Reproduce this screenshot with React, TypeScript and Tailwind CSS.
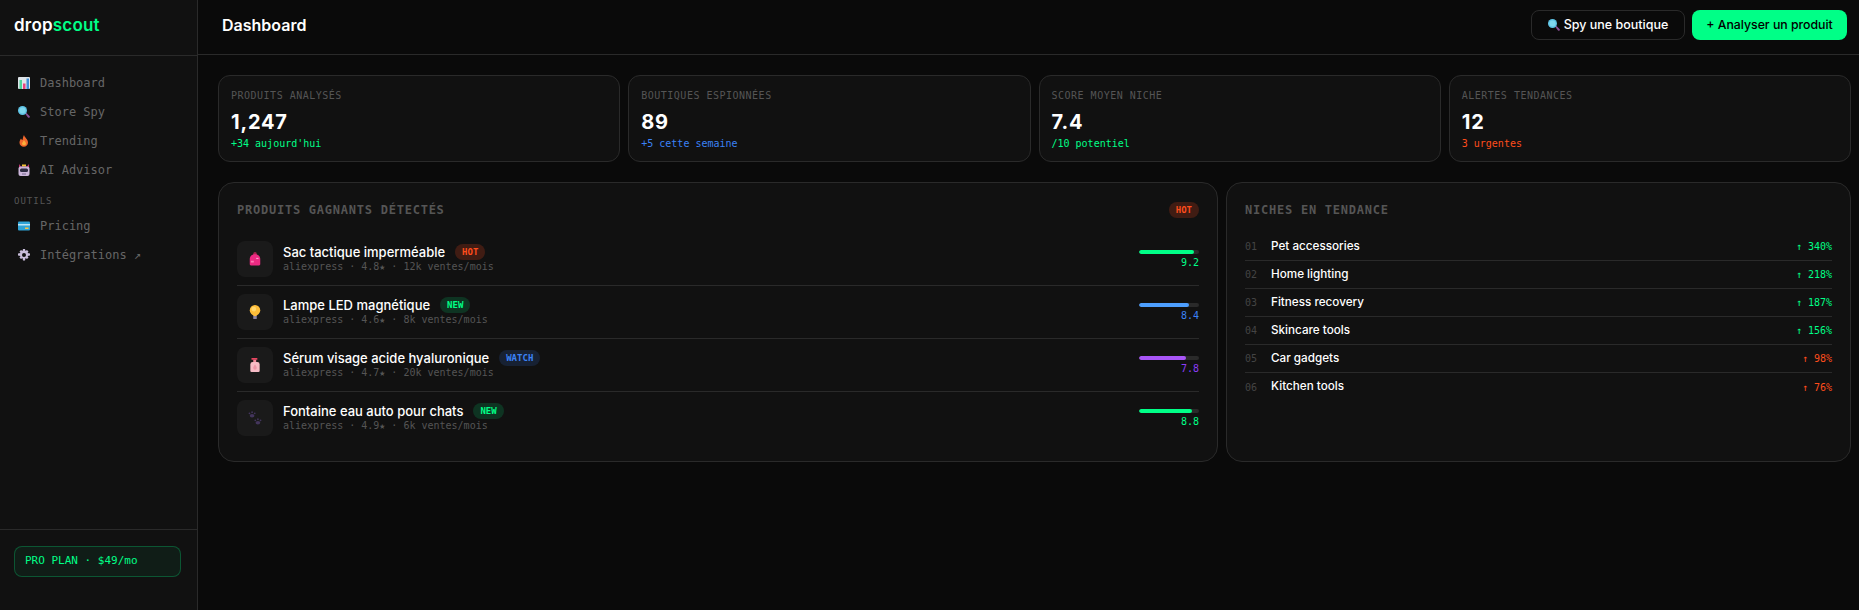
import type { ReactNode } from "react";

const display = "font-['Inter','Liberation_Sans',sans-serif]";
const mono = "font-['DejaVu_Sans_Mono','Liberation_Mono',monospace]";

const Glyph = ({ size = 12, children }: { size?: number; children: ReactNode }) => (
  <svg width={size} height={size} viewBox="0 0 24 24" className="shrink-0">
    {children}
  </svg>
);

const ChartIcon = () => (
  <Glyph>
    <rect x="0" y="0" width="24" height="24" rx="2" fill="#dfe5ea" />
    <rect x="3" y="6" width="5" height="18" fill="#4fd39a" />
    <rect x="10" y="13" width="5" height="11" fill="#e8437f" />
    <rect x="17" y="3" width="5" height="21" fill="#3f8fd8" />
  </Glyph>
);

const SearchIcon = () => (
  <Glyph>
    <path d="M14 15l2-2 7 7a2 2 0 0 1-3 3z" fill="#8a4f96" />
    <circle cx="9" cy="9" r="9" fill="#5fc4e6" />
    <circle cx="9" cy="9" r="6" fill="#7fd8ef" />
  </Glyph>
);

const FlameIcon = () => (
  <Glyph>
    <path d="M12 0c1 5 8 8 8 15a8.500 8.500 0 0 1-17 0c0-4 2-6 3-8 1 2 2 3 3 3 1-3 1-7 3-10z" fill="#f2682c" />
    <path d="M12 10c1 3 4 4 4 8a4.300 4.300 0 0 1-8 0c0-3 3-5 4-8z" fill="#fbb03b" />
  </Glyph>
);

const RobotIcon = () => (
  <Glyph>
    <path d="M2 0l4 5h12l4-5v10H2z" fill="#c2366f" />
    <rect x="8" y="1" width="8" height="4" fill="#f2c230" />
    <rect x="1" y="5" width="22" height="19" rx="4" fill="#cbb6da" />
    <rect x="4" y="9" width="16" height="7" rx="3" fill="#2c2a40" />
    <rect x="8" y="19" width="8" height="2" fill="#7b6a92" />
  </Glyph>
);

const CardIcon = () => (
  <Glyph>
    <rect x="0" y="3" width="24" height="18" rx="2" fill="#2fa3d6" />
    <rect x="0" y="8" width="24" height="3" fill="#bfe6f5" />
    <rect x="14" y="15" width="7" height="3" fill="#f5c445" />
  </Glyph>
);

const GearIcon = () => (
  <Glyph>
    <path
      fillRule="evenodd"
      d="M10 0h4l1 4 3-2 3 3-2 3 5 1v4l-5 1 2 3-3 3-3-2-1 5h-4l-1-5-3 2-3-3 2-3-5-1v-4l5-1-2-3 3-3 3 2zM12 8a4 4 0 1 0 0 8 4 4 0 0 0 0-8z"
      fill="#c9bedb"
    />
  </Glyph>
);

const BagIcon = () => (
  <Glyph size={14}>
    <path d="M9 3a3 3 0 0 1 6 0v2H9z" fill="#a8244f" />
    <path d="M3 21V12c0-5 4-8 9-8s9 3 9 8v9a2 2 0 0 1-2 2H5a2 2 0 0 1-2-2z" fill="#ec2a82" />
    <rect x="5" y="15" width="5" height="3" fill="#ff79b4" />
    <rect x="14" y="10" width="4" height="2" fill="#f7a1c6" />
  </Glyph>
);

const BulbIcon = () => (
  <Glyph size={14}>
    <rect x="9" y="17" width="6" height="7" rx="1" fill="#8d84a0" />
    <circle cx="12" cy="9" r="9" fill="#fdbd39" />
    <path d="M8 15h8l-2 4h-4z" fill="#fdbd39" />
    <circle cx="10" cy="7" r="4" fill="#ffd76e" />
  </Glyph>
);

const BottleIcon = () => (
  <Glyph size={14}>
    <rect x="6" y="0" width="10" height="3" fill="#e8445f" />
    <rect x="9" y="3" width="5" height="4" fill="#f08a9b" />
    <path d="M4 11a4 4 0 0 1 4-4h8a4 4 0 0 1 4 4v11a2 2 0 0 1-2 2H6a2 2 0 0 1-2-2z" fill="#f7bcc6" />
    <path d="M12 11c2 3 3 4 3 6a3 3 0 0 1-6 0c0-2 1-3 3-6z" fill="#ee96a8" />
  </Glyph>
);

const PawIcon = () => (
  <Glyph size={14}>
    <g fill="#43355c">
      <ellipse cx="7" cy="8" rx="4" ry="3" />
      <circle cx="2.500" cy="4" r="1.500" />
      <circle cx="7" cy="2" r="1.500" />
      <circle cx="11.500" cy="4" r="1.500" />
      <ellipse cx="17" cy="20" rx="4" ry="3" />
      <circle cx="12.500" cy="16" r="1.500" />
      <circle cx="17" cy="14" r="1.500" />
      <circle cx="21.500" cy="16" r="1.500" />
    </g>
  </Glyph>
);

const nav = [
  { icon: <ChartIcon />, label: "Dashboard" },
  { icon: <SearchIcon />, label: "Store Spy" },
  { icon: <FlameIcon />, label: "Trending" },
  { icon: <RobotIcon />, label: "AI Advisor" },
];

const stats = [
  { label: "PRODUITS ANALYSÉS", value: "1,247", sub: "+34 aujourd'hui", color: "text-[#00ff87]" },
  { label: "BOUTIQUES ESPIONNÉES", value: "89", sub: "+5 cette semaine", color: "text-[#3b82f6]" },
  { label: "SCORE MOYEN NICHE", value: "7.4", sub: "/10 potentiel", color: "text-[#00ff87]" },
  { label: "ALERTES TENDANCES", value: "12", sub: "3 urgentes", color: "text-[#ff4d1c]" },
];

const products = [
  { icon: <BagIcon />, name: "Sac tactique imperméable", tag: "HOT", tagClass: "bg-[#ff4d1c]/20 text-[#ff4d1c]", meta: "aliexpress · 4.8★ · 12k ventes/mois", score: "9.2", bar: "w-[92%] bg-[#00ff87]", text: "text-[#00ff87]" },
  { icon: <BulbIcon />, name: "Lampe LED magnétique", tag: "NEW", tagClass: "bg-[#00ff87]/15 text-[#00ff87]", meta: "aliexpress · 4.6★ · 8k ventes/mois", score: "8.4", bar: "w-[84%] bg-[#4d9fff]", text: "text-[#3b82f6]" },
  { icon: <BottleIcon />, name: "Sérum visage acide hyaluronique", tag: "WATCH", tagClass: "bg-[#3b82f6]/15 text-[#3b82f6]", meta: "aliexpress · 4.7★ · 20k ventes/mois", score: "7.8", bar: "w-[78%] bg-[#a855f7]", text: "text-[#8b3cf7]" },
  { icon: <PawIcon />, name: "Fontaine eau auto pour chats", tag: "NEW", tagClass: "bg-[#00ff87]/15 text-[#00ff87]", meta: "aliexpress · 4.9★ · 6k ventes/mois", score: "8.8", bar: "w-[88%] bg-[#00ff87]", text: "text-[#00ff87]" },
];

const niches = [
  { n: "01", name: "Pet accessories", pct: "↑ 340%", color: "text-[#00ff87]" },
  { n: "02", name: "Home lighting", pct: "↑ 218%", color: "text-[#00ff87]" },
  { n: "03", name: "Fitness recovery", pct: "↑ 187%", color: "text-[#00ff87]" },
  { n: "04", name: "Skincare tools", pct: "↑ 156%", color: "text-[#00ff87]" },
  { n: "05", name: "Car gadgets", pct: "↑ 98%", color: "text-[#ff4d1c]" },
  { n: "06", name: "Kitchen tools", pct: "↑ 76%", color: "text-[#ff4d1c]" },
];

const NavItem = ({ icon, label }: { icon: ReactNode; label: string }) => (
  <div className={`flex h-[29px] items-center gap-[10px] px-[18px] text-[12px] text-[#666] ${mono}`}>
    {icon}
    <span>{label}</span>
  </div>
);

export default function App() {
  return (
    <div className="flex h-[610px] w-[1859px] overflow-hidden bg-[#0a0a0a] text-white">
      <aside className="flex w-[198px] shrink-0 flex-col border-r border-[#2a2a2a] bg-[#111]">
        <div className={`flex h-[56px] items-center border-b border-[#2a2a2a] px-[14px] pb-[3px] text-[17px] font-semibold tracking-[0.2px] ${display}`}>
          drop<span className="text-[#00ff87]">scout</span>
        </div>
        <nav className="flex-1 pt-[12px]">
          {nav.map((item) => (
            <NavItem key={item.label} {...item} />
          ))}
          <div className={`mt-[10px] mb-[3px] px-[14px] text-[9px] leading-[14px] tracking-[1px] text-[#555] ${mono}`}>OUTILS</div>
          <NavItem icon={<CardIcon />} label="Pricing" />
          <NavItem icon={<GearIcon />} label="Intégrations ↗" />
        </nav>
        <div className="border-t border-[#2a2a2a] pt-[16px] pr-[16px] pb-[33px] pl-[14px]">
          <div className={`flex h-[31px] items-center rounded-lg border border-[#00ff87]/25 bg-[#00ff87]/5 px-[10px] text-[11px] text-[#00ff87] ${mono}`}>
            PRO PLAN · $49/mo
          </div>
        </div>
      </aside>

      <main className="flex min-w-0 flex-1 flex-col">
        <header className="flex h-[55px] items-center justify-between border-b border-[#2a2a2a] pr-[12px] pb-[4px] pl-[24px]">
          <h1 className={`text-[16px] font-semibold ${display}`}>Dashboard</h1>
          <div className="flex gap-[7px]">
            <button className={`flex h-[30px] w-[154px] items-center justify-center gap-[4px] rounded-lg border border-[#2a2a2a] text-[12.5px] font-medium ${display}`}>
              <SearchIcon /> Spy une boutique
            </button>
            <button className={`h-[30px] w-[155px] rounded-lg bg-[#00ff87] text-[12.3px] font-medium text-black ${display}`}>
              + Analyser un produit
            </button>
          </div>
        </header>

        <div className="flex flex-col gap-[20px] pt-[20px] pr-[8px] pl-[20px]">
          <div className="grid grid-cols-4 gap-[8px]">
            {stats.map((s) => (
              <div key={s.label} className="h-[87px] rounded-xl border border-[#2a2a2a] bg-[#111] px-[12px] pt-[12px]">
                <div className={`text-[10px] leading-[15px] tracking-[0.5px] text-[#555] ${mono}`}>{s.label}</div>
                <div className={`mt-[5px] text-[20px] leading-[28px] font-bold tracking-[0.8px] ${display}`}>{s.value}</div>
                <div className={`text-[10px] leading-[15px] ${s.color} ${mono}`}>{s.sub}</div>
              </div>
            ))}
          </div>

          <div className="grid grid-cols-[1.6fr_1fr] gap-[8px]">
            <section className="h-[280px] rounded-2xl border border-[#2a2a2a] bg-[#111] px-[18px] pt-[18px]">
              <div className="mb-[14px] flex items-center justify-between">
                <h2 className={`text-[12px] leading-[18px] font-bold tracking-[0.76px] text-[#555] ${mono}`}>PRODUITS GAGNANTS DÉTECTÉS</h2>
                <span className={`rounded-full bg-[#ff4d1c]/20 px-[7px] py-[1px] text-[9px] leading-[14px] font-bold text-[#ff4d1c] ${mono}`}>HOT</span>
              </div>
              {products.map((p, i) => (
                <div key={p.name} className={`flex items-center gap-[10px] py-[8px] ${i < 3 ? "border-b border-[#2a2a2a]" : ""}`}>
                  <div className="flex h-[36px] w-[36px] shrink-0 items-center justify-center rounded-lg bg-[#1a1a1a]">{p.icon}</div>
                  <div className="min-w-0 flex-1">
                    <div className="flex items-center gap-[10px]">
                      <span className={`text-[13px] leading-[16px] font-medium ${display}`}>{p.name}</span>
                      <span className={`rounded-full px-[7px] text-[9px] leading-[16px] font-bold ${p.tagClass} ${mono}`}>{p.tag}</span>
                    </div>
                    <div className={`text-[10px] leading-[14px] text-[#555] ${mono}`}>{p.meta}</div>
                  </div>
                  <div className="w-[60px] shrink-0 pt-[2px]">
                    <div className="h-[4px] overflow-hidden rounded-full bg-[#2a2a2a]">
                      <div className={`h-full rounded-full ${p.bar}`} />
                    </div>
                    <div className={`mt-[2px] text-right text-[10px] leading-[14px] ${p.text} ${mono}`}>{p.score}</div>
                  </div>
                </div>
              ))}
            </section>

            <section className="h-[280px] rounded-2xl border border-[#2a2a2a] bg-[#111] px-[18px] pt-[18px]">
              <h2 className={`mb-[14px] text-[12px] leading-[18px] font-bold tracking-[0.76px] text-[#555] ${mono}`}>NICHES EN TENDANCE</h2>
              {niches.map((n, i) => (
                <div key={n.n} className={`flex h-[28px] items-center ${i < 5 ? "border-b border-[#2a2a2a]" : ""}`}>
                  <span className={`w-[26px] text-[10px] text-[#444] ${mono}`}>{n.n}</span>
                  <span className={`flex-1 text-[11.7px] font-medium ${display}`}>{n.name}</span>
                  <span className={`text-[10px] ${n.color} ${mono}`}>{n.pct}</span>
                </div>
              ))}
            </section>
          </div>
        </div>
      </main>
    </div>
  );
}
